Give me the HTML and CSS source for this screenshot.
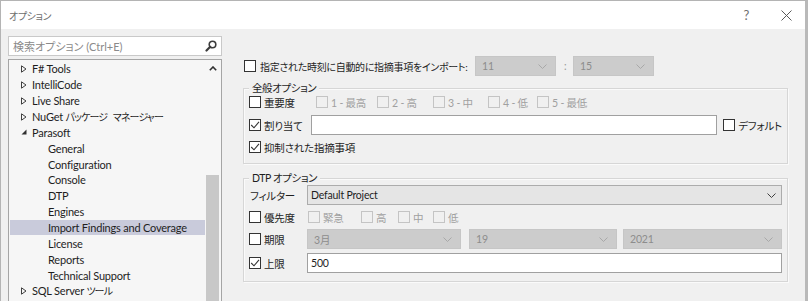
FILE: index.html
```html
<!DOCTYPE html>
<html lang="ja">
<head>
    <meta charset="UTF-8">
    <title>オプション</title>
    <link rel="stylesheet" href="styles.css">
</head>
<body>
<div class="window">
    <div class="titlebar">
        <span class="title">オプション</span>
        <span class="help">?</span>
        <svg class="close" width="11" height="11" viewBox="0 0 11 11"><path d="M0.5 0.5 L10.5 10.5 M10.5 0.5 L0.5 10.5" stroke="#5a5a5a" stroke-width="1" fill="none"/></svg>
    </div>

    <div class="main">
        <div class="left">
            <div class="search">
                <span class="search-text">検索オプション (Ctrl+E)</span>
                <svg width="12" height="12" viewBox="0 0 12 12"><circle cx="7.5" cy="4.5" r="3.3" stroke="#3c3c3c" stroke-width="1.6" fill="none"/><path d="M5.2 6.8 L1.5 10.5" stroke="#3c3c3c" stroke-width="2.2" stroke-linecap="round"/></svg>
            </div>
            <div class="tree">
                <ul class="tree-list">
                    <li class="row"><svg class="arrow" width="8" height="8" viewBox="0 0 8 8"><path d="M1.5 0.8 L6 4 L1.5 7.2 Z" fill="none" stroke="#404040"/></svg>F# Tools</li>
                    <li class="row"><svg class="arrow" width="8" height="8" viewBox="0 0 8 8"><path d="M1.5 0.8 L6 4 L1.5 7.2 Z" fill="none" stroke="#404040"/></svg>IntelliCode</li>
                    <li class="row"><svg class="arrow" width="8" height="8" viewBox="0 0 8 8"><path d="M1.5 0.8 L6 4 L1.5 7.2 Z" fill="none" stroke="#404040"/></svg>Live Share</li>
                    <li class="row"><svg class="arrow" width="8" height="8" viewBox="0 0 8 8"><path d="M1.5 0.8 L6 4 L1.5 7.2 Z" fill="none" stroke="#404040"/></svg>NuGet&nbsp;<span class="ja">パッケージ マネージャー</span></li>
                    <li class="row"><svg class="arrow" width="8" height="8" viewBox="0 0 8 8"><path d="M6.5 1.5 L6.5 6.5 L1.5 6.5 Z" fill="#303030"/></svg>Parasoft</li>
                    <li class="row child">General</li>
                    <li class="row child">Configuration</li>
                    <li class="row child">Console</li>
                    <li class="row child">DTP</li>
                    <li class="row child">Engines</li>
                    <li class="row child selected">Import Findings and Coverage</li>
                    <li class="row child">License</li>
                    <li class="row child">Reports</li>
                    <li class="row child">Technical Support</li>
                    <li class="row"><svg class="arrow" width="8" height="8" viewBox="0 0 8 8"><path d="M1.5 0.8 L6 4 L1.5 7.2 Z" fill="none" stroke="#404040"/></svg>SQL Server&nbsp;<span class="ja">ツール</span></li>
                </ul>
                <div class="scrollbar">
                    <div class="scroll-up"><svg width="8" height="5" viewBox="0 0 8 5"><polyline points="0.8,4.2 4,1 7.2,4.2" fill="none" stroke="#303030" stroke-width="1.6"/></svg></div>
                    <div class="scroll-track"></div>
                    <div class="scroll-thumb"></div>
                </div>
            </div>
        </div>

        <div class="right">
            <div class="import-row">
                <span class="cb"></span>
                <span class="cb-label import-label">指定された時刻に自動的に指摘事項をインポート:</span>
                <div class="combo combo--time">
                    <span>11</span>
                    <svg width="9" height="5" viewBox="0 0 9 5"><polyline points="0.5,0.5 4.5,4.5 8.5,0.5" fill="none" stroke="#a8a8a8"/></svg>
                </div>
                <span class="colon">:</span>
                <div class="combo combo--time">
                    <span>15</span>
                    <svg width="9" height="5" viewBox="0 0 9 5"><polyline points="0.5,0.5 4.5,4.5 8.5,0.5" fill="none" stroke="#a8a8a8"/></svg>
                </div>
            </div>

            <!-- 全般オプション -->
            <div class="group group--general">
                <div class="legend">全般オプション</div>
                <div class="g-row">
                    <span class="cb"></span>
                    <span class="cb-label severity-label">重要度</span>
                    <div class="opts opts--severity">
                        <span class="opt"><span class="cb cb--disabled"></span>1 - 最高</span>
                        <span class="opt"><span class="cb cb--disabled"></span>2 - 高</span>
                        <span class="opt"><span class="cb cb--disabled"></span>3 - 中</span>
                        <span class="opt"><span class="cb cb--disabled"></span>4 - 低</span>
                        <span class="opt"><span class="cb cb--disabled"></span>5 - 最低</span>
                    </div>
                </div>
                <div class="g-row g-row--assign">
                    <span class="cb cb--checked"><svg width="10" height="10" viewBox="0 0 10 10"><polyline points="1.2,5 4,7.8 9,1.8" fill="none" stroke="#333" stroke-width="1.1"/></svg></span>
                    <span class="cb-label assign-label">割り当て</span>
                    <div class="textbox textbox--assign"></div>
                    <span class="cb default-cb"></span>
                    <span class="cb-label">デフォルト</span>
                </div>
                <div class="g-row g-row--suppressed">
                    <span class="cb cb--checked"><svg width="10" height="10" viewBox="0 0 10 10"><polyline points="1.2,5 4,7.8 9,1.8" fill="none" stroke="#333" stroke-width="1.1"/></svg></span>
                    <span class="cb-label">抑制された指摘事項</span>
                </div>
            </div>

            <!-- DTP オプション -->
            <div class="group group--dtp">
                <div class="legend">DTP オプション</div>
                <div class="d-row">
                    <div class="d-label">フィルター</div>
                    <div class="select">
                        <span>Default Project</span>
                        <svg width="9" height="5" viewBox="0 0 9 5"><polyline points="0.5,0.5 4.5,4.5 8.5,0.5" fill="none" stroke="#404040"/></svg>
                    </div>
                </div>
                <div class="d-row d-row--priority">
                    <div class="d-label"><span class="cb"></span><span class="cb-label">優先度</span></div>
                    <div class="opts opts--priority">
                        <span class="opt"><span class="cb cb--disabled"></span>緊急</span>
                        <span class="opt"><span class="cb cb--disabled"></span>高</span>
                        <span class="opt"><span class="cb cb--disabled"></span>中</span>
                        <span class="opt"><span class="cb cb--disabled"></span>低</span>
                    </div>
                </div>
                <div class="d-row d-row--deadline">
                    <div class="d-label"><span class="cb"></span><span class="cb-label">期限</span></div>
                    <div class="combo combo--month">
                        <span>3月</span>
                        <svg width="9" height="5" viewBox="0 0 9 5"><polyline points="0.5,0.5 4.5,4.5 8.5,0.5" fill="none" stroke="#a8a8a8"/></svg>
                    </div>
                    <div class="combo combo--day">
                        <span>19</span>
                        <svg width="9" height="5" viewBox="0 0 9 5"><polyline points="0.5,0.5 4.5,4.5 8.5,0.5" fill="none" stroke="#a8a8a8"/></svg>
                    </div>
                    <div class="combo combo--year">
                        <span>2021</span>
                        <svg width="9" height="5" viewBox="0 0 9 5"><polyline points="0.5,0.5 4.5,4.5 8.5,0.5" fill="none" stroke="#a8a8a8"/></svg>
                    </div>
                </div>
                <div class="d-row d-row--limit">
                    <div class="d-label"><span class="cb cb--checked"><svg width="10" height="10" viewBox="0 0 10 10"><polyline points="1.2,5 4,7.8 9,1.8" fill="none" stroke="#333" stroke-width="1.1"/></svg></span><span class="cb-label">上限</span></div>
                    <div class="textbox textbox--limit">500</div>
                </div>
            </div>
        </div>
    </div>
</div>
</body>
</html>
```

FILE: styles.css
```css
* {
    box-sizing: border-box;
}

body {
    margin: 0;
    font-family: "Lato", "Noto Sans CJK JP", sans-serif;
    font-size: 10.5px;
    letter-spacing: -0.2px;
    font-feature-settings: "palt";
    color: #1e1e1e;
}

.window {
    width: 808px;
    height: 301px;
    overflow: hidden;
    display: flex;
    flex-direction: column;
    background-color: #f0f0f0;
    border-top: 1px solid #b4b4b4;
    border-left: 1px solid #b4b4b4;
    border-right: 3px solid #b9b9b9;
}

/* タイトルバー */
.titlebar {
    flex-shrink: 0;
    height: 28px;
    display: flex;
    align-items: center;
    padding-left: 8px;
    background-color: #fff;
}

.title {
    flex: 1;
    font-size: 10px;
    letter-spacing: -0.4px;
    color: #6e6e6e;
}

.help {
    margin-right: 32px;
    color: #6e6e6e;
    font-size: 13px;
}

.close {
    margin-right: 13px;
}

.main {
    flex: 1;
    display: flex;
    min-height: 0;
}

/* 左側ツリー */
.left {
    width: 214px;
    flex-shrink: 0;
    margin-left: 7px;
    padding-top: 7px;
    display: flex;
    flex-direction: column;
}

.search {
    flex-shrink: 0;
    height: 20px;
    display: flex;
    align-items: center;
    padding: 0 4px;
    background-color: #fff;
    border: 1px solid #c9c9c9;
}

.search-text {
    flex: 1;
    font-size: 11px;
    letter-spacing: 0;
    color: #8a8a8a;
}

.tree {
    flex: 1;
    display: flex;
    min-width: 0;
    margin-top: 3px;
    background-color: #f6f6f6;
    border: 1px solid #a5a5a5;
    border-bottom: none;
}

.tree-list {
    flex: 1;
    min-width: 0;
    overflow: hidden;
    margin: 0;
    padding: 1px 0 0;
    list-style: none;
    font-size: 11px;
}

.row {
    height: 15.86px;
    display: flex;
    align-items: center;
    padding-left: 11px;
    white-space: nowrap;
}

.row .arrow {
    flex-shrink: 0;
    margin-right: 4px;
}

/* カタカナは詰めて表示 */
.row .ja {
    font-size: 10px;
    letter-spacing: -0.9px;
    word-spacing: 4px;
}

.row.child {
    padding-left: 39px;
}

.row.selected {
    margin-left: 1px;
    padding-left: 38px;
    background-color: #c9cbdb;
}

.scrollbar {
    width: 16px;
    flex-shrink: 0;
    display: flex;
    flex-direction: column;
    padding: 0 2px 0 1px;
}

.scroll-up {
    height: 17px;
    display: flex;
    align-items: center;
    justify-content: center;
}

.scroll-track {
    height: 98px;
}

.scroll-thumb {
    flex: 1;
    background-color: #c8c8c8;
}

/* 右側 */
.right {
    flex: 1;
    min-width: 0;
    padding: 27px 17px 0 21px;
}

.import-row {
    height: 20px;
    display: flex;
    align-items: center;
    padding-left: 1px;
}

.cb {
    width: 12px;
    height: 12px;
    flex-shrink: 0;
    display: flex;
    align-items: center;
    justify-content: center;
    background-color: #fff;
    border: 1px solid #333;
}

.cb--disabled {
    background-color: transparent;
    border-color: #c4c4c4;
}

.cb-label {
    margin-left: 3px;
    white-space: nowrap;
}

.import-label {
    width: 211px;
    margin-left: 4px;
    font-size: 10px;
    letter-spacing: -0.3px;
}

.combo {
    height: 20px;
    display: flex;
    align-items: center;
    justify-content: space-between;
    padding: 0 8px 0 6px;
    color: #8d8d8d;
    background-color: #cccccc;
    border: 1px solid #c6c6c6;
}

.combo--time {
    width: 81px;
    margin-left: 4px;
}

.colon {
    width: 17px;
    padding-left: 8px;
    color: #9a9a9a;
}

.colon + .combo--time {
    margin-left: 0;
}

/* グループボックス */
.group {
    padding: 0 5px 6px;
    border: 1px solid #d6d6d6;
    box-shadow: inset 1px 1px 0 #fafafa, 1px 1px 0 #fafafa;
}

.group--general {
    margin-top: 12px;
}

.group--dtp {
    margin-top: 14px;
    padding-bottom: 8px;
}

.legend {
    width: fit-content;
    height: 14px;
    line-height: 14px;
    margin: -8px 0 -3px;
    padding: 0 3px;
    letter-spacing: -0.4px;
    background-color: #f0f0f0;
}

.group--dtp .legend {
    margin-bottom: 0;
}

.g-row {
    height: 20px;
    display: flex;
    align-items: center;
}

.g-row--assign {
    margin-top: 3px;
}

.g-row--suppressed {
    margin-top: 2px;
}

.severity-label {
    width: 52px;
}

.opts--severity {
    display: grid;
    grid-template-columns: 61px 56px 55px 49px auto;
}

.opts--priority {
    display: grid;
    grid-template-columns: 53px 37px 35px auto;
    margin-left: 1px;
}

.opt {
    display: flex;
    align-items: center;
    gap: 3px;
    color: #a0a0a0;
    white-space: nowrap;
}

.assign-label {
    width: 47px;
}

.textbox {
    height: 20px;
    display: flex;
    align-items: center;
    padding-left: 3px;
    background-color: #fff;
    border: 1px solid #a0a0a0;
}

.textbox--assign {
    width: 407px;
}

.default-cb {
    margin-left: 6px;
}

.d-row {
    height: 20px;
    display: flex;
    align-items: center;
}

.d-row--priority,
.d-row--deadline {
    margin-top: 2px;
}

.d-row--limit {
    margin-top: 4px;
}

.d-label {
    width: 58px;
    flex-shrink: 0;
    display: flex;
    align-items: center;
    padding-left: 1px;
}

.d-row--priority .d-label,
.d-row--deadline .d-label,
.d-row--limit .d-label {
    padding-left: 0;
}

.select {
    flex: 1;
    height: 20px;
    display: flex;
    align-items: center;
    justify-content: space-between;
    padding: 0 5px 0 3px;
    background-color: #e5e5e5;
    border: 1px solid #acacac;
}

.combo--month {
    width: 154px;
}

.combo--day {
    width: 148px;
    margin-left: 8px;
}

.combo--year {
    flex: 1;
    margin-left: 6px;
}

.textbox--limit {
    flex: 1;
}
```
